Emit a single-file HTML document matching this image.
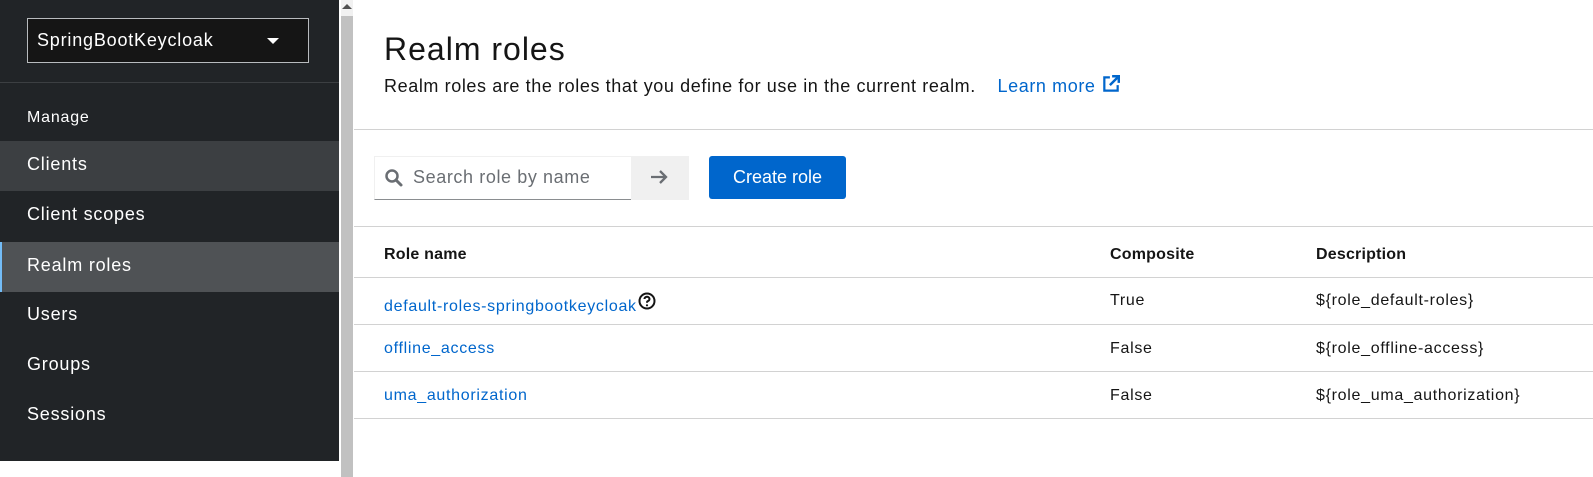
<!DOCTYPE html>
<html><head><style>
*{margin:0;padding:0;box-sizing:border-box}
body{width:1593px;height:461px;overflow:hidden;font-family:"Liberation Sans",sans-serif;background:#fff;position:relative}
.side{position:absolute;left:0;top:0;width:339px;height:461px;background:#212427;color:#fff;letter-spacing:0.8px}
.sel{position:absolute;left:27px;top:18px;width:282px;height:45px;border:1px solid #b8bbbe;background:#151515;font-size:18px;padding:11px 0 0 9px}
.car{position:absolute;right:29px;top:19px;border-left:6px solid transparent;border-right:6px solid transparent;border-top:6px solid #fff}
.div{position:absolute;left:0;top:82px;width:339px;height:1px;background:#3c3f42}
.it{position:absolute;left:0;width:339px;height:50px;font-size:18px;padding:13px 0 0 27px}
.sb{position:absolute;left:341px;top:0;width:12px;height:461px;background:#c1c1c1}
.sbt{position:absolute;left:341px;top:0;width:12px;height:16px;background:#f1f1f1}
.main{position:absolute;left:354px;top:0;right:0;height:461px;letter-spacing:0.7px}
.a{position:absolute;white-space:nowrap}
.hr{position:absolute;left:0;right:0;height:1px;background:#d2d2d2}
a{color:#06c;text-decoration:none}
</style></head><body>
<div class="side">
 <div class="sel">SpringBootKeycloak<div class="car"></div></div>
 <div class="div"></div>
 <div class="it" style="top:96px;font-size:16px">Manage</div>
 <div class="it" style="top:141px;background:#3c3f42">Clients</div>
 <div class="it" style="top:191px">Client scopes</div>
 <div class="it" style="top:242px;background:#4f5255;border-left:2px solid #73bcf7;padding-left:25px">Realm roles</div>
 <div class="it" style="top:291px">Users</div>
 <div class="it" style="top:341px">Groups</div>
 <div class="it" style="top:391px">Sessions</div>
</div>
<div class="sbt"></div>
<div style="position:absolute;left:342px;top:4px;border-left:5px solid transparent;border-right:5px solid transparent;border-bottom:5px solid #505050"></div>
<div class="sb" style="top:16px"></div>
<div class="main">
 <div class="a" style="left:30px;top:31px;font-size:32px;color:#151515;letter-spacing:1px">Realm roles</div>
 <div class="a" style="left:30px;top:74px;font-size:18px;color:#151515;letter-spacing:0.6px">Realm roles are the roles that you define for use in the current realm. <a style="margin-left:16px">Learn more <svg width="20" height="20" viewBox="0 0 18 18" style="vertical-align:-2px"><path d="M8 3H3v12h12v-5" fill="none" stroke="#06c" stroke-width="2"/><path d="M10 2h6v6M16 2L8 10" fill="none" stroke="#06c" stroke-width="2.2"/></svg></a></div>
 <div class="hr" style="top:129px"></div>
 <div class="a" style="left:20px;top:156px;width:257px;height:44px;border-bottom:1px solid #8a8d90;border-top:1px solid #f0f0f0;border-left:1px solid #f0f0f0"></div>
 <svg class="a" style="left:30px;top:168px" width="20" height="20" viewBox="0 0 20 20"><circle cx="8" cy="8" r="5.5" fill="none" stroke="#6a6e73" stroke-width="2.5"/><path d="M12 12l5 5" stroke="#6a6e73" stroke-width="3" stroke-linecap="round"/></svg>
 <div class="a" style="left:59px;top:167px;font-size:18px;color:#6a6e73;letter-spacing:0.6px">Search role by name</div>
 <div class="a" style="left:277px;top:156px;width:58px;height:44px;background:#f0f0f0"></div>
 <svg class="a" style="left:296px;top:169px" width="18" height="16" viewBox="0 0 18 16"><path d="M1 8h15M10 2l6 6-6 6" fill="none" stroke="#6a6e73" stroke-width="2.3"/></svg>
 <div class="a" style="left:355px;top:156px;width:137px;height:43px;background:#06c;border-radius:3px;color:#fff;font-size:18px;text-align:center;padding-top:11px;letter-spacing:0">Create role</div>
 <div class="hr" style="top:226px"></div>
 <div class="a" style="left:30px;top:246px;font-size:16px;font-weight:bold;color:#151515;letter-spacing:0.2px">Role name</div>
 <div class="a" style="left:756px;top:246px;font-size:16px;font-weight:bold;color:#151515;letter-spacing:0.2px">Composite</div>
 <div class="a" style="left:962px;top:246px;font-size:16px;font-weight:bold;color:#151515;letter-spacing:0.2px">Description</div>
 <div class="hr" style="top:277px"></div>
 <div class="a" style="left:30px;top:292px;font-size:16px"><a>default-roles-springbootkeycloak</a> <svg width="18" height="18" viewBox="0 0 18 18" style="vertical-align:1px;margin-left:-4px"><circle cx="9" cy="9" r="7.5" fill="none" stroke="#151515" stroke-width="2"/><path d="M6.5 7a2.5 2.3 0 1 1 3.3 2.2c-.6.3-.8.7-.8 1.5" fill="none" stroke="#151515" stroke-width="2"/><circle cx="9" cy="13.3" r="1.1" fill="#151515"/></svg></div>
 <div class="a" style="left:756px;top:292px;font-size:16px;color:#151515">True</div>
 <div class="a" style="left:962px;top:292px;font-size:16px;color:#151515">${role_default-roles}</div>
 <div class="hr" style="top:324px"></div>
 <div class="a" style="left:30px;top:340px;font-size:16px"><a>offline_access</a></div>
 <div class="a" style="left:756px;top:340px;font-size:16px;color:#151515">False</div>
 <div class="a" style="left:962px;top:340px;font-size:16px;color:#151515">${role_offline-access}</div>
 <div class="hr" style="top:371px"></div>
 <div class="a" style="left:30px;top:387px;font-size:16px"><a>uma_authorization</a></div>
 <div class="a" style="left:756px;top:387px;font-size:16px;color:#151515">False</div>
 <div class="a" style="left:962px;top:387px;font-size:16px;color:#151515">${role_uma_authorization}</div>
 <div class="hr" style="top:418px"></div>
</div>
</body></html>
